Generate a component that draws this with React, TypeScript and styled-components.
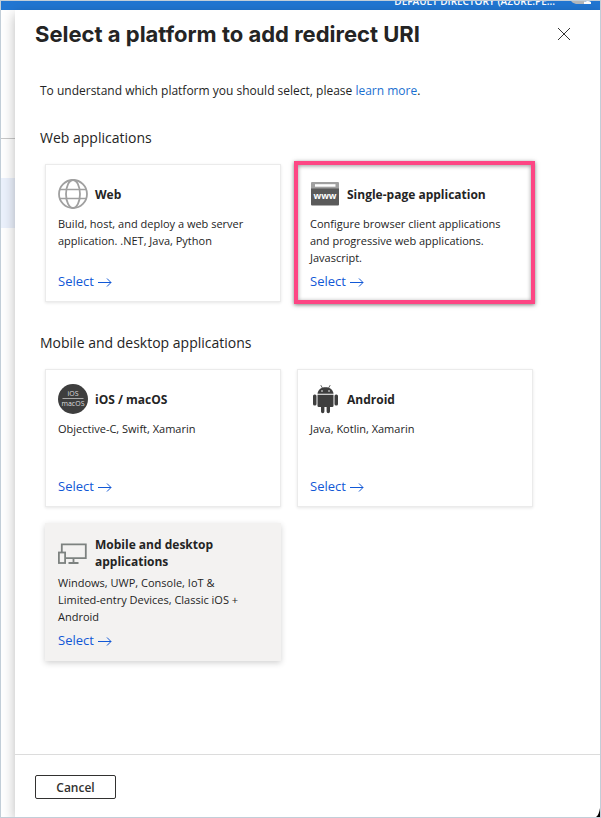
import React from "react";
import styled, { createGlobalStyle } from "styled-components";

const GlobalStyle = createGlobalStyle`
  *, *::before, *::after { box-sizing: border-box; }
  body {
    margin: 0;
    background: #fff;
    color: #242424;
    font-family: "Open Sans", "Noto Sans", sans-serif;
    font-size: 12px;
    line-height: 17px;
  }
`;

const Frame = styled.div`
  display: flex;
  flex-direction: column;
  min-height: 100vh;
  border: 1px solid #c2ced8;
  overflow: hidden;
`;

const TopBar = styled.header`
  display: flex;
  justify-content: flex-end;
  align-items: flex-end;
  height: 9px;
  padding-right: 7px;
  overflow: hidden;
  background: #2176d2;
  color: #fff;
`;

const Directory = styled.span`
  margin-right: 16px;
  padding-bottom: 2px;
  font-size: 10px;
  font-weight: 600;
  line-height: 14px;
  white-space: nowrap;
`;

const Avatar = styled.svg`
  width: 22px;
  height: 9px;
`;

const Body = styled.div`
  display: flex;
  flex: 1;
`;

const Backdrop = styled.div`
  flex: none;
  width: 14px;
  padding-top: 128px;
  background: #fff;
`;

const BackdropRow = styled.div`
  height: 90px;
  border-top: 1px solid #c8c8c8;
  background: linear-gradient(#fff 39px, #ebf1fc 39px);
`;

const Panel = styled.section`
  position: relative;
  display: flex;
  flex: 1;
  flex-direction: column;
  min-width: 0;
  background: #fff;
  box-shadow: 0 4px 12px rgba(0, 0, 0, 0.28);
`;

const PanelHeader = styled.div`
  display: flex;
  align-items: center;
  justify-content: space-between;
  padding: 8px 26px 0 20px;
`;

const Title = styled.h1`
  margin: 0;
  font-family: Inter, sans-serif;
  font-size: 22px;
  font-weight: 700;
  line-height: 32px;
`;

const CloseButton = styled.button`
  display: flex;
  padding: 2px;
  border: 0;
  background: none;
  color: #333;
  cursor: pointer;
`;

const Content = styled.main`
  flex: 1;
  padding: 31px 25px 24px;
`;

const Intro = styled.p`
  margin: 0 0 26px;
  line-height: 20px;
`;

const DocLink = styled.a`
  color: #1b6fd0;
  text-decoration: none;
`;

const Group = styled.section`
  margin-bottom: 30px;
`;

const GroupTitle = styled.h2`
  margin: 0 0 15px;
  font-size: 14px;
  font-weight: 400;
  line-height: 22px;
`;

const CardGrid = styled.div`
  display: grid;
  grid-template-columns: repeat(auto-fill, 236px);
  gap: 16px;
  padding-left: 5px;
`;

type Tone = "plain" | "marked" | "hovered";

const Card = styled.article<{ $tone: Tone }>`
  position: relative;
  display: flex;
  flex-direction: column;
  min-height: 138px;
  padding: 12px 12px 10px;
  border: 1px solid ${(p) => (p.$tone === "hovered" ? "#f3f2f1" : "#ebebeb")};
  background: ${(p) => (p.$tone === "hovered" ? "#f3f2f1" : "#fff")};
  box-shadow: ${(p) =>
    p.$tone === "hovered"
      ? "0 2px 6px rgba(0, 0, 0, 0.18)"
      : "0 1px 3px rgba(0, 0, 0, 0.1)"};

  &::after {
    content: "";
    display: ${(p) => (p.$tone === "marked" ? "block" : "none")};
    position: absolute;
    inset: -4px -3px -3px -4px;
    border: 4px solid #fd4684;
    box-shadow: 0 1px 4px rgba(0, 0, 0, 0.5), inset 0 1px 4px rgba(0, 0, 0, 0.4);
    pointer-events: none;
  }
`;

const CardHeader = styled.div`
  display: flex;
  align-items: center;
  gap: 7px;
  min-height: 34px;
  margin-bottom: 4px;

  svg {
    flex: none;
  }
`;

const CardTitle = styled.h3`
  margin: 0;
  font-size: 12px;
  font-weight: 700;
  line-height: 17px;
`;

const Description = styled.p`
  margin: 0;
  max-width: 200px;
  font-size: 11px;
`;

const SelectButton = styled.button`
  display: flex;
  align-items: center;
  align-self: flex-start;
  gap: 4px;
  margin-top: auto;
  padding: 0;
  border: 0;
  background: none;
  color: #1158d6;
  font-family: inherit;
  font-size: 13px;
  line-height: 20px;
  cursor: pointer;
`;

const Footer = styled.footer`
  padding: 20px;
  padding-bottom: 18px;
  border-top: 1px solid #dcdcdc;
`;

const CancelButton = styled.button`
  display: block;
  min-width: 81px;
  height: 24px;
  padding: 0 16px;
  border: 1px solid #323130;
  border-radius: 2px;
  background: #fff;
  color: #323130;
  font-family: inherit;
  font-size: 12px;
  font-weight: 600;
  cursor: pointer;
`;

const CornerMark = styled.svg`
  position: absolute;
  right: 0;
  bottom: 0;
`;

const GlobeIcon = () => (
  <svg width="30" height="30" viewBox="0 0 30 30" fill="none" stroke="#a0a0a0" strokeWidth="1.8" aria-hidden="true">
    <circle cx="15" cy="15" r="14" />
    <ellipse cx="15" cy="15" rx="7" ry="14" />
    <path d="M1.800 10.500h26.400M1.800 19.500h26.400" strokeWidth="1.5" />
  </svg>
);

const BrowserIcon = () => (
  <svg width="30" height="30" viewBox="0 0 30 30" aria-hidden="true">
    <path d="M1 4q0-1 1-1h26q1 0 1 1v6H1z" fill="#a0a0a0" />
    <path d="M5 5.200h20.500v2.500H5z" fill="#fff" />
    <path d="M1 9.500h28V25.500q0 1-1 1H2q-1 0-1-1z" fill="#5a5a5a" />
    <text x="15" y="20" textAnchor="middle" fontFamily="Open Sans, sans-serif" fontSize="9" fontWeight="700" fill="#fff">
      www
    </text>
  </svg>
);

const AppleIcon = () => (
  <svg width="30" height="30" viewBox="0 0 30 30" aria-hidden="true">
    <circle cx="15" cy="15" r="15" fill="#3e3e3e" />
    <path d="M4.500 14.500h21" stroke="#aaa" strokeWidth="1" />
    <g fontFamily="Open Sans, sans-serif" fill="#ddd" textAnchor="middle">
      <text x="15" y="12" fontSize="7">iOS</text>
      <text x="15" y="22" fontSize="7">macOS</text>
    </g>
  </svg>
);

const AndroidIcon = () => (
  <svg width="30" height="30" viewBox="0 0 30 30" fill="#3e3e3e" aria-hidden="true">
    <path d="M11 1.500l1.600 2.800M20 1.500l-1.600 2.800" stroke="#3e3e3e" strokeWidth=".8" strokeLinecap="round" />
    <path d="M7.500 9.800C7.800 5.800 11 3.200 15.500 3.200s7.700 2.600 8 6.600z" />
    <path d="M7.500 10.800h16v10.900q0 1.300-1.300 1.300H20v4.500q0 1.700-1.700 1.700t-1.700-1.700V23h-2.200v4.500q0 1.700-1.700 1.700T11 27.500V23H8.800q-1.300 0-1.300-1.300z" />
    <rect x="3" y="10.500" width="3.500" height="11" rx="1.500" />
    <rect x="24.500" y="10.500" width="3.500" height="11" rx="1.500" />
    <circle cx="12" cy="7" r=".8" fill="#fff" />
    <circle cx="19" cy="7" r=".8" fill="#fff" />
  </svg>
);

const DevicesIcon = () => (
  <svg width="30" height="30" viewBox="0 0 30 30" fill="none" stroke="#7d8280" strokeWidth="1.800" aria-hidden="true">
    <path d="M3.800 14V6.400h24V20.200H8" />
    <rect x=".9" y="14.500" width="6.200" height="10.500" />
    <path d="M15.500 20.500v4M10.500 25h10" />
  </svg>
);

const ArrowIcon = () => (
  <svg width="14" height="20" viewBox="0 0 14 20" fill="none" stroke="currentColor" aria-hidden="true">
    <path d="M0 11.500h13M9 7.500l4 4-4 4" />
  </svg>
);

interface PlatformProps {
  icon: React.ReactNode;
  name: string;
  text: string;
  tone?: Tone;
}

const Platform = ({ icon, name, text, tone = "plain" }: PlatformProps) => (
  <Card $tone={tone}>
    <CardHeader>
      {icon}
      <CardTitle>{name}</CardTitle>
    </CardHeader>
    <Description>{text}</Description>
    <SelectButton type="button" aria-label={`Select ${name}`}>
      Select
      <ArrowIcon />
    </SelectButton>
  </Card>
);

export default function App() {
  return (
    <>
      <GlobalStyle />
      <Frame>
        <TopBar>
          <Directory>DEFAULT DIRECTORY (AZURE.PE...</Directory>
          <Avatar viewBox="0 0 22 9" aria-hidden="true">
            <path d="M0 0h14v3H5Q1 2 0 0z" fill="#b4b8bc" />
            <path d="M13 1q4-2 7 0v2H13z" fill="#fff" />
          </Avatar>
        </TopBar>
        <Body>
          <Backdrop>
            <BackdropRow />
          </Backdrop>
          <Panel>
            <PanelHeader>
              <Title>Select a platform to add redirect URI</Title>
              <CloseButton type="button" aria-label="Close">
                <svg width="16" height="16" viewBox="0 0 16 16" stroke="currentColor" aria-hidden="true">
                  <path d="M2 2l12 12M14 2L2 14" />
                </svg>
              </CloseButton>
            </PanelHeader>
            <Content>
              <Intro>
                To understand which platform you should select, please <DocLink href="#">learn more</DocLink>.
              </Intro>
              <Group>
                <GroupTitle>Web applications</GroupTitle>
                <CardGrid>
                  <Platform
                    icon={<GlobeIcon />}
                    name="Web"
                    text="Build, host, and deploy a web server application. .NET, Java, Python"
                  />
                  <Platform
                    tone="marked"
                    icon={<BrowserIcon />}
                    name="Single-page application"
                    text="Configure browser client applications and progressive web applications. Javascript."
                  />
                </CardGrid>
              </Group>
              <Group>
                <GroupTitle>Mobile and desktop applications</GroupTitle>
                <CardGrid>
                  <Platform icon={<AppleIcon />} name="iOS / macOS" text="Objective-C, Swift, Xamarin" />
                  <Platform icon={<AndroidIcon />} name="Android" text="Java, Kotlin, Xamarin" />
                  <Platform
                    tone="hovered"
                    icon={<DevicesIcon />}
                    name="Mobile and desktop applications"
                    text="Windows, UWP, Console, IoT & Limited-entry Devices, Classic iOS + Android"
                  />
                </CardGrid>
              </Group>
            </Content>
            <Footer>
              <CancelButton type="button">Cancel</CancelButton>
            </Footer>
            <CornerMark width="4" height="9" viewBox="0 0 4 9" aria-hidden="true">
              <path d="M4 0v9H0Q3 7 4 0z" fill="#000" />
            </CornerMark>
          </Panel>
        </Body>
      </Frame>
    </>
  );
}
